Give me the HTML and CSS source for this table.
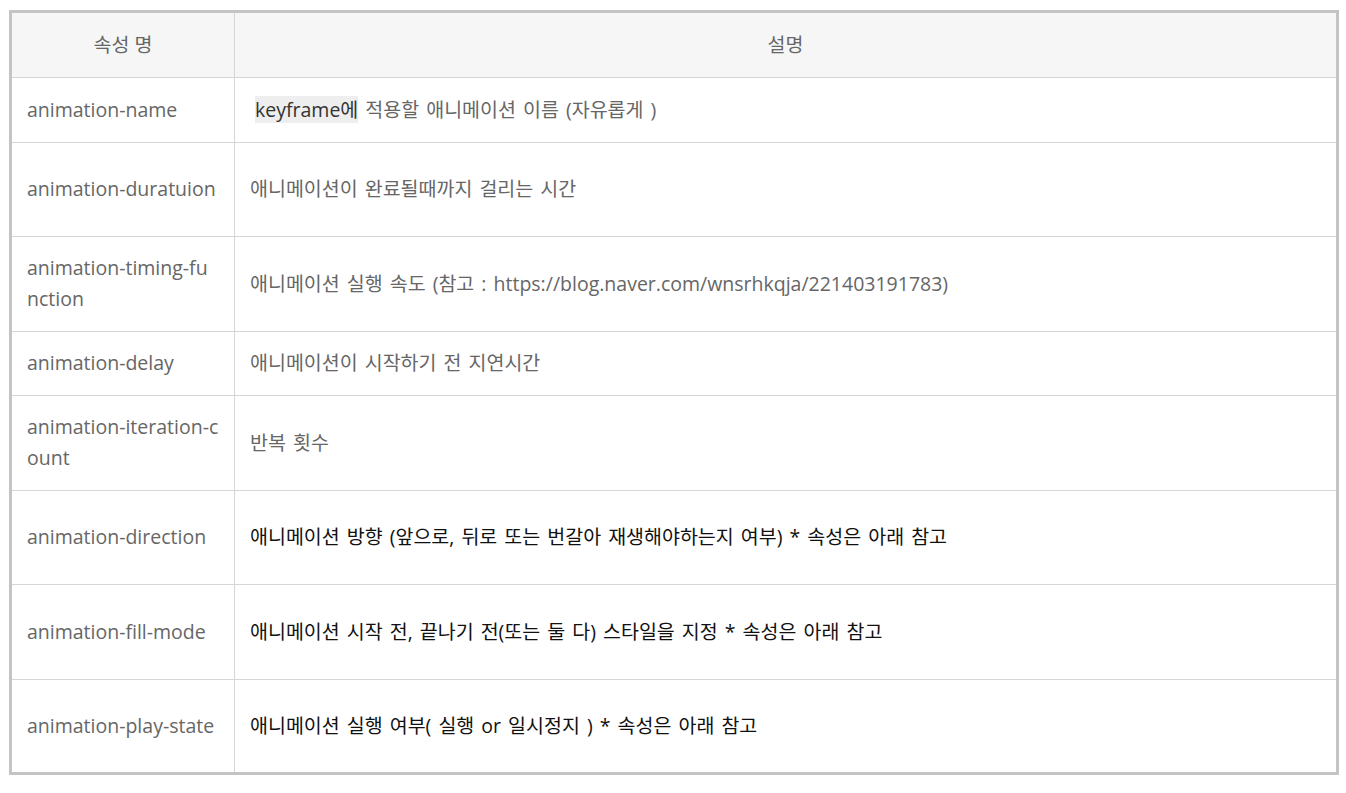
FILE: index.html
```html
<!DOCTYPE html>
<html lang="ko">
<head>
<meta charset="utf-8">
<link rel="stylesheet" href="styles.css">
</head>
<body>
<div class="frame">
<table class="props">
<thead>
<tr class="r-head"><th class="c-name">속성 명</th><th class="c-desc">설명</th></tr>
</thead>
<tbody>
<tr class="r-64"><td class="c-name">animation-name</td><td class="c-desc"><span class="hl">keyframe에</span> 적용할 애니메이션 이름 (자유롭게 )</td></tr>
<tr class="r-94"><td class="c-name">animation-duratuion</td><td class="c-desc">애니메이션이 완료될때까지 걸리는 시간</td></tr>
<tr class="r-95"><td class="c-name">animation-timing-function</td><td class="c-desc">애니메이션 실행 속도 (참고 : https://blog.naver.com/wnsrhkqja/221403191783)</td></tr>
<tr class="r-64b"><td class="c-name">animation-delay</td><td class="c-desc">애니메이션이 시작하기 전 지연시간</td></tr>
<tr class="r-95"><td class="c-name">animation-iteration-count</td><td class="c-desc">반복 횟수</td></tr>
<tr class="r-94"><td class="c-name">animation-direction</td><td class="c-desc dark">애니메이션 방향 (앞으로, 뒤로 또는 번갈아 재생해야하는지 여부) * 속성은 아래 참고</td></tr>
<tr class="r-95"><td class="c-name">animation-fill-mode</td><td class="c-desc dark">애니메이션 시작 전, 끝나기 전(또는 둘 다) 스타일을 지정 * 속성은 아래 참고</td></tr>
<tr class="r-last"><td class="c-name">animation-play-state</td><td class="c-desc dark">애니메이션 실행 여부( 실행 or 일시정지 ) * 속성은 아래 참고</td></tr>
</tbody>
</table>
</div>
</body>
</html>
```
FILE: styles.css
```css
html, body {
  margin: 0;
  padding: 0;
  background: #fff;
}
body {
  font-family: "Open Sans", "Noto Sans CJK KR", sans-serif;
  font-size: 19.5px;
  color: #666;
}
.frame {
  margin: 10px 7px 0 9px;
  border: 3px solid #c4c4c4;
}
.props {
  width: 100%;
  border-collapse: separate;
  border-spacing: 0;
  table-layout: fixed;
}
.props th, .props td {
  box-sizing: border-box;
  padding: 0 15px 2px;
  border-bottom: 1px solid #d6d6d6;
  vertical-align: middle;
  line-height: 31px;
  text-align: left;
  font-weight: normal;
}
.props tr.r-last td { border-bottom: none; }
.props .c-name {
  width: 223px;
  border-right: 1px solid #d6d6d6;
  word-break: break-all;
}
.props .c-desc { word-spacing: 2px; }
.props th {
  background: #f6f6f6;
  text-align: center;
  color: #666;
}
.r-head th { height: 65px; }
.r-64 td { height: 65px; }
.r-64b td { height: 64px; }
.r-94 td { height: 94px; }
.r-95 td { height: 95px; }
.r-last td { height: 92px; }
.dark { color: #111; }
.hl {
  margin-left: 5px;
  background: #eeeeee;
  color: #333;
  word-spacing: 0;
}
```
